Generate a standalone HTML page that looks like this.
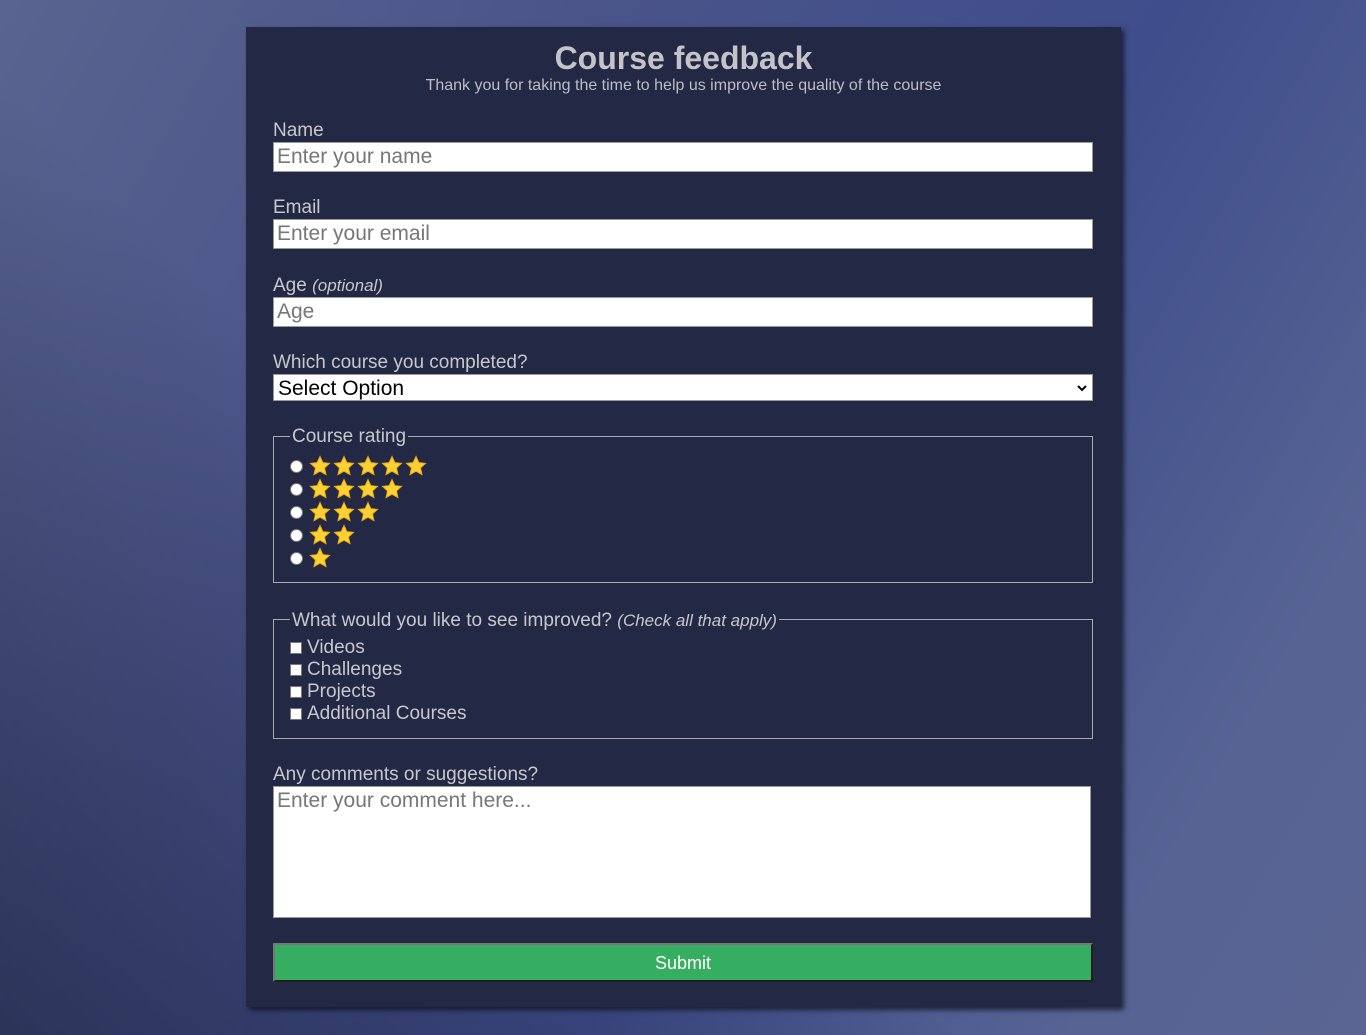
<!DOCTYPE html>
<html><head><style>
*{box-sizing:border-box;margin:0;padding:0}
body{width:1366px;height:1035px;overflow:hidden;font-family:"Liberation Sans",sans-serif;background:linear-gradient(120deg,#5a6490 0%,#4a5489 30%,#3f4d8c 60%,#566393 85%,#5a6593 100%);position:relative}
.shade{position:absolute;left:0;top:0;width:1366px;height:1035px;background:linear-gradient(45deg,rgba(20,25,50,.55) 0%,rgba(20,25,50,0) 40%)}
.panel{position:absolute;left:246px;top:27px;width:875px;height:980px;background:#232844;box-shadow:3px 3px 5px rgba(0,0,0,.6)}
.a{position:absolute;color:#c8c8cc}
h1{position:absolute;left:0;width:875px;top:13px;text-align:center;font-size:32px;color:#c4c4c8;font-weight:bold}
.sub{position:absolute;left:0;width:875px;top:50px;text-align:center;font-size:16px;color:#bdbdc4}
.lbl{position:absolute;left:27px;font-size:19px;color:#c8c8cc}
.in{position:absolute;left:27px;width:820px;height:30px;background:#fff;border:1px solid #999;font-size:21px;color:#777;padding:2px 3px;line-height:24px}
fieldset{position:absolute;left:27px;width:820px;border:2px solid #aaa;border-width:1.5px}
.leg{position:absolute;left:16px;top:-12px;background:#232844;padding:0 2px;font-size:19px;color:#c8c8cc}
.row{position:absolute;left:16px;display:flex;align-items:center}
.radio{width:13px;height:13px;border-radius:50%;background:#fff;border:1px solid #777;margin-right:6px}
.cb{width:12px;height:12px;background:#fff;border:1px solid #777;margin-right:5px}
svg{margin-right:2px}
</style></head><body><div class="shade"></div>
<div class="panel">
<h1>Course feedback</h1>
<div class="sub">Thank you for taking the time to help us improve the quality of the course</div>
<div class="lbl" style="top:93px">Name</div>
<div class="in" style="top:115px">Enter your name</div>
<div class="lbl" style="top:170px">Email</div>
<div class="in" style="top:192px">Enter your email</div>
<div class="lbl" style="top:248px">Age <i style="font-size:17px">(optional)</i></div>
<div class="in" style="top:270px">Age</div>
<div class="lbl" style="top:325px">Which course you completed?</div>
<div class="in" style="top:347px;height:27px;color:#000;padding:0 4px;line-height:27px">Select Option<svg style="position:absolute;right:3px;top:9px" width="10" height="8" viewBox="0 0 10 8"><path d="M1 2l4 4 4-4" stroke="#000" stroke-width="2" fill="none"/></svg></div>
<fieldset style="top:409px;height:147px"><div class="leg" style="top:-11px">Course rating</div>
<svg width="0" height="0" style="position:absolute"><defs><symbol id="s" viewBox="0 0 24 24"><path d="M12 1.5l3.1 6.8 7.4.8-5.5 5 1.6 7.4L12 17.7 5.4 21.5 7 14.1 1.5 9.1l7.4-.8z" fill="#fdd033" stroke="#e8a90e" stroke-width="1"/></symbol></defs></svg>
<div class="row" style="top:18px"><div class="radio"></div><svg width="22" height="22"><use href="#s"/></svg><svg width="22" height="22"><use href="#s"/></svg><svg width="22" height="22"><use href="#s"/></svg><svg width="22" height="22"><use href="#s"/></svg><svg width="22" height="22"><use href="#s"/></svg></div>
<div class="row" style="top:41px"><div class="radio"></div><svg width="22" height="22"><use href="#s"/></svg><svg width="22" height="22"><use href="#s"/></svg><svg width="22" height="22"><use href="#s"/></svg><svg width="22" height="22"><use href="#s"/></svg></div>
<div class="row" style="top:64px"><div class="radio"></div><svg width="22" height="22"><use href="#s"/></svg><svg width="22" height="22"><use href="#s"/></svg><svg width="22" height="22"><use href="#s"/></svg></div>
<div class="row" style="top:87px"><div class="radio"></div><svg width="22" height="22"><use href="#s"/></svg><svg width="22" height="22"><use href="#s"/></svg></div>
<div class="row" style="top:110px"><div class="radio"></div><svg width="22" height="22"><use href="#s"/></svg></div>
</fieldset>
<fieldset style="top:592px;height:120px"><div class="leg" style="top:-10px">What would you like to see improved? <i style="font-size:17px">(Check all that apply)</i></div>
<div class="row a" style="top:17px;font-size:19px"><div class="cb"></div>Videos</div>
<div class="row a" style="top:39px;font-size:19px"><div class="cb"></div>Challenges</div>
<div class="row a" style="top:61px;font-size:19px"><div class="cb"></div>Projects</div>
<div class="row a" style="top:83px;font-size:19px"><div class="cb"></div>Additional Courses</div>
</fieldset>
<div class="lbl" style="top:737px">Any comments or suggestions?</div>
<div class="in" style="top:759px;width:818px;height:132px;padding:2px 3px">Enter your comment here...</div>
<div style="position:absolute;left:27px;top:916px;width:820px;height:39px;background:#36ae62;border:2px solid #1e1e1e;border-top-color:#777;border-left-color:#777;color:#fff;font-size:18px;text-align:center;line-height:37px">Submit</div>
</div>
</body></html>
